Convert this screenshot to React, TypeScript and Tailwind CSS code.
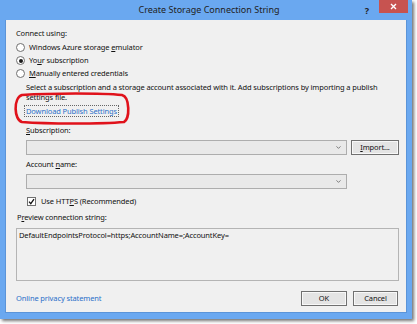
import { ChevronDown } from "lucide-react";

const font = { fontFamily: '"Noto Sans", "Open Sans", sans-serif' };

function Radio({ checked, children }: { checked?: boolean; children: React.ReactNode }) {
  return (
    <div className="flex items-center h-[13px] gap-[4px] pl-[10px]">
      <span className="w-[9px] h-[9px] rounded-full border border-[#707070] bg-white flex items-center justify-center">
        {checked && <span className="w-[4px] h-[4px] rounded-full bg-[#1a1a1a]" />}
      </span>
      <span>{children}</span>
    </div>
  );
}

function Select() {
  return (
    <div className="w-[321px] h-[15px] border border-[#adadad] bg-[#e9e9e9] flex items-center justify-end pr-[4px]">
      <ChevronDown size={7} strokeWidth={2.5} className="text-[#555]" />
    </div>
  );
}

function Button({ w, children }: { w: string; children: React.ReactNode }) {
  return (
    <div
      className={`${w} h-[15px] border border-[#707070] bg-[#e4e4e4] flex items-center justify-center shadow-[inset_0_0_0_1px_#f8f8f8]`}
    >
      {children}
    </div>
  );
}

export default function App() {
  return (
    <div className="w-[417px] h-[324px] bg-white relative text-[7.5px] tracking-[-0.12px] text-[#111]" style={font}>
      <div className="w-[412px] h-[319px] bg-[#6aa8f0] flex flex-col px-[5px] pb-[6px] shadow-[2px_2px_3px_rgba(0,0,0,0.55)]">
        <div className="h-[20px] relative flex items-center justify-center text-[9px] tracking-normal text-[#222] pl-[6px]">
          Create Storage Connection String
          <span className="absolute right-[38px] top-[4px] text-[9px] font-bold text-[#222]">?</span>
          <div className="absolute right-[-1px] top-0 w-[29px] h-[13px] bg-[#c75350] flex items-center justify-center">
            <svg width="7" height="7" viewBox="0 0 7 7">
              <path d="M1 1L6 6M6 1L1 6" stroke="white" strokeWidth="1.4" />
            </svg>
          </div>
        </div>
        <div className="flex-1 bg-[#f0f0f0] border border-[#5b94d8] border-t-0 flex flex-col">
          <div className="pl-[10px] mt-[8px] h-[12px] flex items-center">Connect using:</div>
          <div className="mt-[1px] flex flex-col">
            <Radio>Windows Azure storage <u>e</u>mulator</Radio>
            <Radio checked>Yo<u>u</u>r subscription</Radio>
            <Radio><u>M</u>anually entered credentials</Radio>
          </div>
          <div className="pl-[20px] leading-[10px] mt-[2px] pr-[10px]">
            Select a subscription and a storage account associated with it. Add subscriptions by importing a publish settings file.
          </div>
          <div className="pl-[18px] mt-[3px] flex">
            <span className="text-[#2a6fc9] border border-dotted border-[#666] px-[1px] leading-[10px]">
              Download Publish Settings
            </span>
          </div>
          <div className="pl-[20px] mt-[8px] h-[11px] flex items-center">
            <span><u>S</u>ubscription:</span>
          </div>
          <div className="pl-[20px] mt-[4px] flex gap-[4px]">
            <Select />
            <Button w="w-[48px]">
              <span><u>I</u>mport...</span>
            </Button>
          </div>
          <div className="pl-[20px] mt-[4px] h-[11px] flex items-center">
            <span>Account <u>n</u>ame:</span>
          </div>
          <div className="pl-[20px] mt-[4px] flex">
            <Select />
          </div>
          <div className="pl-[21px] mt-[7px] flex items-center gap-[5px] h-[11px]">
            <span className="w-[9px] h-[9px] border border-[#707070] bg-white flex items-center justify-center">
              <svg width="7" height="7" viewBox="0 0 7 7">
                <path d="M1 3.6L2.8 5.6L6 1.2" stroke="#111" strokeWidth="1.3" fill="none" />
              </svg>
            </span>
            <span>Use HTT<u>P</u>S (Recommended)</span>
          </div>
          <div className="pl-[11px] mt-[5px] h-[11px] flex items-center">
            <span>P<u>r</u>eview connection string:</span>
          </div>
          <div className="ml-[10px] mt-[5px] w-[383px] h-[53px] border border-[#b4b4b4] bg-[#f0f0f0] px-[2px] pt-[1px] leading-[10px]">
            DefaultEndpointsProtocol=https;AccountName=;AccountKey=
          </div>
          <div className="mt-[10px] pl-[10px] pr-[8px] flex items-center">
            <span className="text-[#2a6fc9] flex-1">Online privacy statement</span>
            <div className="flex gap-[6px]">
              <Button w="w-[46px]">OK</Button>
              <Button w="w-[45px]">Cancel</Button>
            </div>
          </div>
        </div>
      </div>
      <svg className="absolute left-[12px] top-[92px]" width="120" height="33" viewBox="0 0 120 33">
        <path
          d="M10 3 C40 1 90 1 110 3 C118 5 118 27 112 30 C90 32 35 32 10 30 C2 28 1 6 10 3 Z"
          fill="none"
          stroke="#e0121b"
          strokeWidth="2.6"
        />
      </svg>
    </div>
  );
}
